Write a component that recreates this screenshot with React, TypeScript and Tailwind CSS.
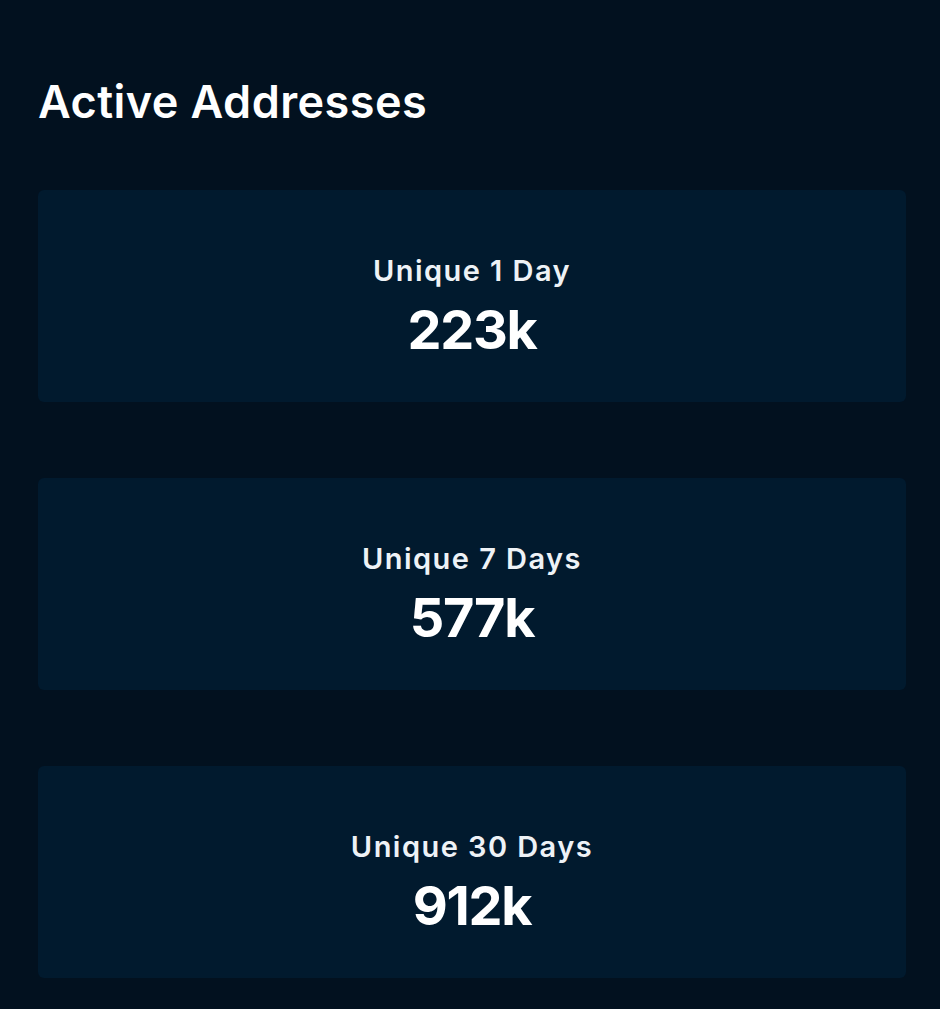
import React from 'react';

interface Stat {
  label: string;
  value: string;
}

const stats: Stat[] = [
  { label: 'Unique 1 Day', value: '223k' },
  { label: 'Unique 7 Days', value: '577k' },
  { label: 'Unique 30 Days', value: '912k' },
];

const StatCard: React.FC<Stat> = ({ label, value }) => (
  <div className="h-[212px] rounded-md bg-[#011a2e] flex flex-col items-center justify-center pt-5">
    <span className="text-[29px] font-semibold text-[#eef2f6] leading-none tracking-[0.05em]">{label}</span>
    <span className="mt-[18px] text-[54px] font-bold text-white leading-none tracking-tight">{value}</span>
  </div>
);

const App: React.FC = () => {
  return (
    <div className="min-h-screen bg-[#02111f] px-[38px] pt-[79px] pb-8 font-['Inter',sans-serif]">
      <h1 className="text-[45px] font-semibold text-white leading-none tracking-[0.01em]">Active Addresses</h1>
      <div className="mt-[66px] flex flex-col gap-[76px] w-[868px]">
        {stats.map((s) => (
          <StatCard key={s.label} {...s} />
        ))}
      </div>
    </div>
  );
};

export default App;
